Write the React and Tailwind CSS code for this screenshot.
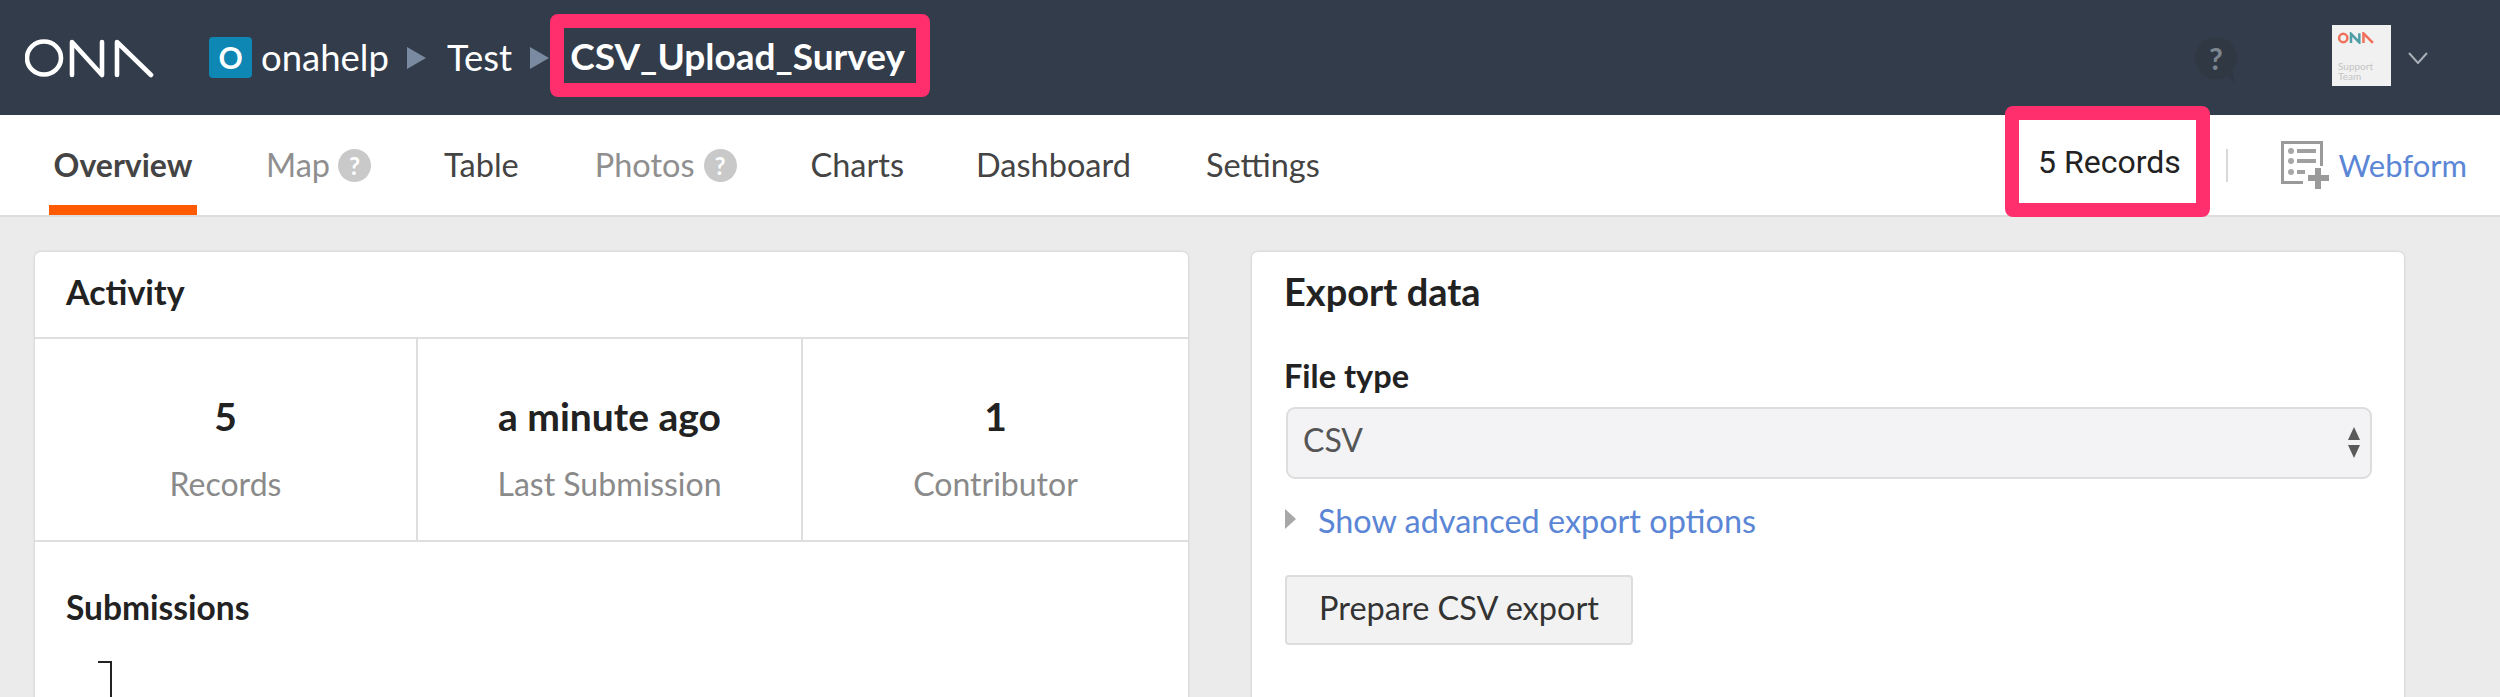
const font = "font-['Lato','Open_Sans',sans-serif]";

function Logo() {
  return (
    <svg width="130" height="40" viewBox="0 0 130 40" fill="none" stroke="#fff" strokeWidth="4.600" strokeLinecap="round" strokeLinejoin="round" className="shrink-0">
      <ellipse cx="19" cy="20" rx="17" ry="16.500" />
      <path d="M47 37V4L77 37V4" />
      <path d="M92 37V4L126 37" />
    </svg>
  );
}

function HelpDot({ className = "ml-[9px]" }) {
  return (
    <span className={`${className} w-[33px] h-[33px] rounded-full bg-[#c9c9c9] text-white font-bold text-[24px] leading-[33px] text-center inline-block`}>?</span>
  );
}

function Tab({ children, muted, active, className = "" }) {
  return (
    <div className={`h-full flex items-center relative ${active ? "text-[32px]" : "text-[32.5px]"} ${muted ? "text-[#8f8f8f]" : "text-[#444]"} ${active ? "font-bold" : ""} ${className}`}>
      {children}
    </div>
  );
}

function Stat({ value, label, border }) {
  return (
    <div className={`flex flex-col items-center pt-[54px] ${border ? "border-r-2 border-[#dedede]" : ""}`}>
      <div className="text-[39px] leading-[46px] font-bold text-[#222]">{value}</div>
      <div className="mt-[24px] text-[32px] leading-[42px] text-[#8a8a8a]">{label}</div>
    </div>
  );
}

export default function App() {
  return (
    <div className={`w-[2500px] h-[697px] overflow-hidden bg-[#ebebeb] ${font}`}>
      <header className="h-[115px] bg-[#323c4a] flex items-center pl-[25px] pr-[72px]">
        <Logo />
        <div className="ml-[54px] w-[43px] h-[41px] mt-[-1px] rounded-[4px] bg-[#0f87b5] text-white text-[30px] font-bold leading-[41px] text-center">O</div>
        <span className="ml-[9px] text-white text-[36.5px]">onahelp</span>
        <span className="ml-[18px] w-0 h-0 border-y-[11px] border-y-transparent border-l-[19px] border-l-[#7a8aa0]" />
        <span className="ml-[21px] text-white text-[36.5px]">Test</span>
        <span className="ml-[18px] w-0 h-0 border-y-[11px] border-y-transparent border-l-[19px] border-l-[#7a8aa0]" />
        <div className="ml-[1px] w-[380px] h-[83px] mt-[-4px] border-[14px] border-[#fe2f6c] rounded-[8px] flex items-center pl-[6px] text-white font-bold text-[37px] whitespace-nowrap">CSV_Upload_Survey</div>
        <div className="relative ml-auto w-[42px] h-[42px] rounded-full bg-[#2f3843] text-[#7c8590] font-bold text-[30px] leading-[42px] text-center">
          ?
          <svg width="14" height="14" viewBox="0 0 14 14" className="absolute left-[27px] top-[34px]" fill="#2f3843">
            <path d="M0 0h10l3 12z" />
          </svg>
        </div>
        <div className="ml-[95px] w-[59px] h-[61px] mt-[-4px] bg-[#f1f1f1] pl-[6px] pr-[16px] pt-[7px] flex flex-col">
          <svg width="36" height="12" viewBox="0 0 130 40" fill="none" strokeWidth="9" className="shrink-0">
            <ellipse cx="19" cy="20" rx="15" ry="15" stroke="#f0705a" />
            <path d="M47 38V5L77 36V3" stroke="#4f9ea5" />
            <path d="M92 38V3l34 35" stroke="#f0705a" />
          </svg>
          <div className="mt-[17px] text-[10px] leading-[10px] text-[#c4c4c4]">Support Team</div>
        </div>
        <svg width="20" height="12" viewBox="0 0 20 12" fill="none" stroke="#a9afb7" strokeWidth="2" className="ml-[17px]">
          <path d="M1 1l9 10 9-10" />
        </svg>
      </header>

      <nav className="h-[102px] bg-white border-b-2 border-[#dddddd] flex items-center pl-[49px] pr-[33px]">
        <Tab active className="w-[148px] justify-center border-b-[10px] border-[#ff5a00] pt-[10px]">Overview</Tab>
        <Tab muted className="ml-[69px]">Map<HelpDot className="ml-[8px]" /></Tab>
        <Tab className="ml-[73px]">Table</Tab>
        <Tab muted className="ml-[76px]">Photos<HelpDot /></Tab>
        <Tab className="ml-[74px]">Charts</Tab>
        <Tab className="ml-[72px]">Dashboard</Tab>
        <Tab className="ml-[75px]">Settings</Tab>
        <div className="ml-auto w-[205px] h-[111px] mt-[-7px] relative z-10 border-[14px] border-[#fe2f6c] bg-white rounded-[8px] flex items-center justify-center pl-[3px] text-[32px] text-[#222] font-['Roboto',sans-serif] whitespace-nowrap">5 Records</div>
        <div className="ml-[16px] w-[2px] h-[33px] bg-[#d8d8d8]" />
        <svg width="48" height="48" viewBox="0 0 48 48" className="ml-[53px] shrink-0" fill="none">
          <path d="M40.500 25V1.500H1.500V41.500H22" stroke="#9a9a9a" strokeWidth="3" />
          <circle cx="10" cy="10" r="3" fill="#a8a8a8" />
          <circle cx="10" cy="20" r="3" fill="#a8a8a8" />
          <circle cx="10" cy="31" r="3" fill="#a8a8a8" />
          <path d="M16 10h19M16 20h19M16 31h8" stroke="#a0a0a0" strokeWidth="4" />
          <path d="M37 27v21M27 37h21" stroke="#9a9a9a" strokeWidth="6" />
        </svg>
        <span className="ml-[9px] text-[31px] text-[#5b86d6]">Webform</span>
      </nav>

      <main className="flex items-start pl-[35px] pt-[35px] gap-[64px]">
        <section className="w-[1153px] h-[500px] bg-white rounded-t-[6px] shadow-[0_0_3px_rgba(0,0,0,0.18)]">
          <h2 className="h-[87px] px-[31px] pb-[6px] flex items-center text-[34px] font-bold text-[#222] border-b-2 border-[#dedede]">Activity</h2>
          <div className="h-[203px] grid grid-cols-[383px_385px_1fr] border-b-2 border-[#dedede]">
            <Stat value="5" label="Records" border />
            <Stat value="a minute ago" label="Last Submission" border />
            <Stat value="1" label="Contributor" />
          </div>
          <div className="pl-[31px] pt-[45px]">
            <h3 className="text-[33.5px] leading-[40px] font-bold text-[#222]">Submissions</h3>
            <div className="ml-[32px] mt-[34px] w-[14px] h-[60px] border-t-2 border-r-2 border-[#222]" />
          </div>
        </section>

        <section className="w-[1152px] h-[500px] bg-white rounded-t-[6px] shadow-[0_0_3px_rgba(0,0,0,0.18)] pl-[32px] pr-[32px]">
          <h2 className="h-[87px] pb-[8px] flex items-center text-[38px] font-bold text-[#222]">Export data</h2>
          <label className="block mt-[17px] text-[32.5px] leading-[40px] font-bold text-[#222]">File type</label>
          <div className="mt-[11px] ml-[2px] h-[72px] bg-[#f3f3f5] border-2 border-[#dddddd] rounded-[9px] flex items-center justify-between pb-[6px] pl-[15px] pr-[9px] text-[32px] text-[#555]">
            CSV
            <svg width="14" height="32" viewBox="0 0 14 32" fill="#5a5a5a" className="mt-[6px]">
              <path d="M7 0l6 13H1zM1 18h12l-6 13z" />
            </svg>
          </div>
          <div className="mt-[21px] ml-[1px] flex items-center">
            <span className="w-0 h-0 mt-[-4px] border-y-[10px] border-y-transparent border-l-[11px] border-l-[#a8a8a8]" />
            <span className="ml-[22px] text-[32.4px] leading-[42px] text-[#5b86d6]">Show advanced export options</span>
          </div>
          <button className="mt-[33px] ml-[1px] w-[348px] h-[70px] pb-[3px] bg-[#f2f2f2] border-2 border-[#dddddd] rounded-[4px] text-[32.5px] text-[#333]">Prepare CSV export</button>
        </section>
      </main>
    </div>
  );
}
